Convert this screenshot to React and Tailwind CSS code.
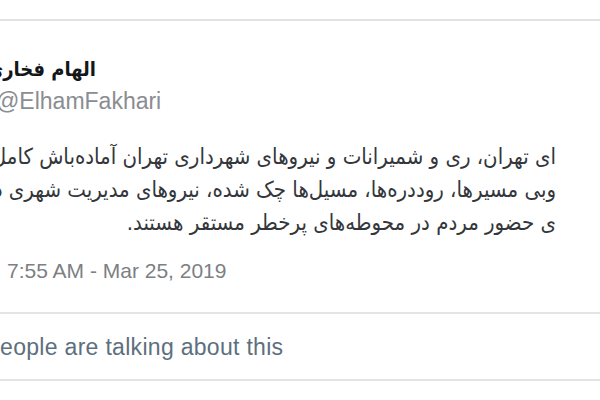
export default function App() {
  const fa = { fontFamily: '"DejaVu Sans Condensed", "DejaVu Sans", sans-serif' };
  const lines = [
    'ای تهران، ری و شمیرانات و نیروهای شهرداری تهران آماده‌باش کامل هستند',
    'وبی مسیرها، روددره‌ها، مسیل‌ها چک شده، نیروهای مدیریت شهری در محل',
    'ی حضور مردم در محوطه‌های پرخطر مستقر هستند.',
  ];
  return (
    <div className="w-[600px] h-[400px] overflow-hidden bg-white" style={{ fontFamily: '"Liberation Sans", Arial, sans-serif' }}>
      <div className="h-[19px]" />
      <div className="h-[2px] bg-[#e2e2e2]" />

      {/* author */}
      <div className="pt-[35px] w-[96px] flex justify-end">
        <div dir="rtl" className="shrink-0 whitespace-nowrap text-[20px] leading-[26px] font-bold text-[#14171a]" style={fa}>
          الهام فخاری
        </div>
      </div>
      <div className="mt-[6px] -ml-[4px] whitespace-nowrap text-[23px] leading-[26px] text-[#8a8d91]">@ElhamFakhari</div>

      {/* tweet body */}
      <div className="mt-[26px] w-[556px] text-[#33363a] text-[22px] leading-[33px]">
        {lines.map((l) => (
          <div key={l} className="flex justify-end">
            <div dir="rtl" className="shrink-0 whitespace-nowrap" style={fa}>{l}</div>
          </div>
        ))}
      </div>

      {/* date */}
      <div className="mt-[19px] pl-[7px] text-[21px] leading-[26px] text-[#7d7f82]">7:55 AM - Mar 25, 2019</div>

      <div className="mt-[28px] h-[2px] bg-[#e4e4e4]" />
      <div className="mt-[20px] -ml-[13px] whitespace-nowrap text-[23px] tracking-[0.3px] leading-[26px] text-[#5d6f7e]">people are talking about this</div>
      <div className="mt-[19px] h-[2px] bg-[#e4e4e4]" />
    </div>
  );
}
